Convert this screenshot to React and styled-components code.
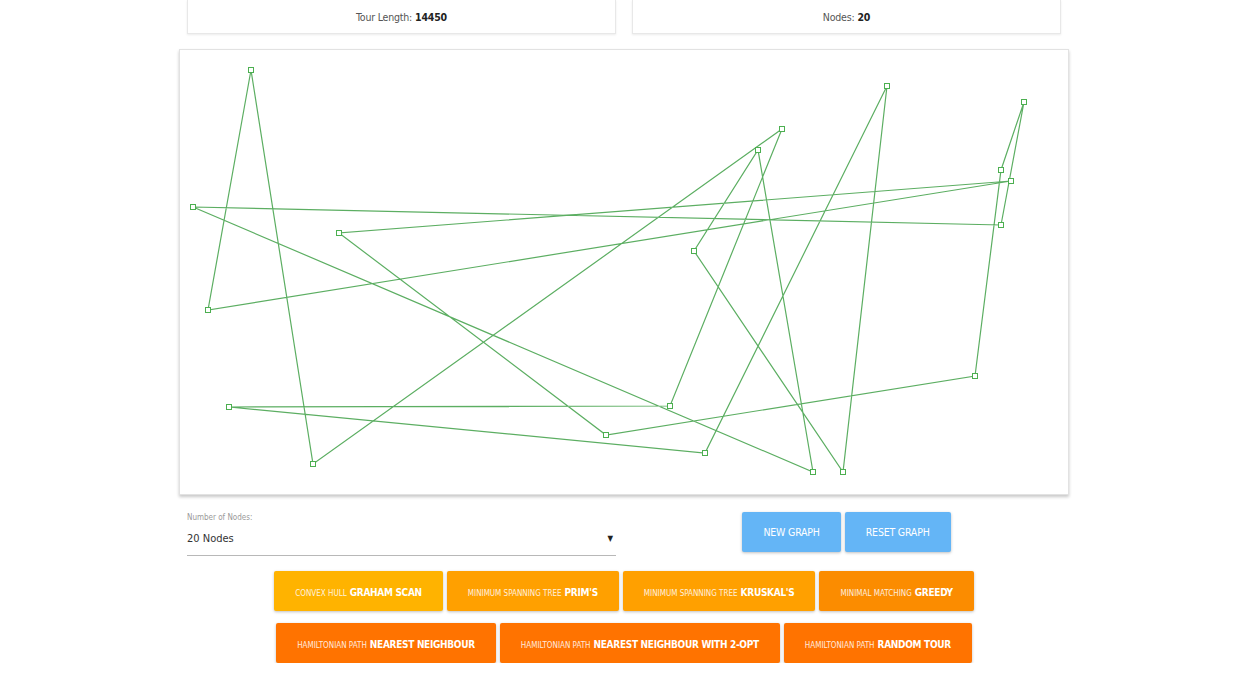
import React from "react";
import styled, { createGlobalStyle } from "styled-components";

const GlobalStyle = createGlobalStyle`
  html, body {
    margin: 0;
    padding: 0;
    background: #ffffff;
    font-family: "Liberation Sans Narrow", "DejaVu Sans Condensed", "Liberation Sans", sans-serif;
    color: #444;
  }
`;

const Page = styled.div`
  width: 890px;
  margin: 0 auto;
  display: flex;
  flex-direction: column;
`;

const TwoCols = styled.div`
  display: grid;
  grid-template-columns: 1fr 1fr;
  align-items: ${(props) => props.align || "stretch"};
`;

const StatCard = styled.div`
  margin: 0 8px 0 8px;
  height: 33px;
  display: flex;
  align-items: center;
  justify-content: center;
  background: #fff;
  border: 1px solid #e8e8e8;
  border-top: none;
  box-shadow: 0 1px 2px rgba(0, 0, 0, 0.08);
  font-size: 10.5px;
  letter-spacing: -0.2px;
  color: #555;

  b {
    color: #222;
    margin-left: 3px;
  }
`;

const Canvas = styled.div`
  margin-top: 15px;
  height: 444px;
  background: #fff;
  border: 1px solid #e2e2e2;
  box-shadow: 0 2px 3px rgba(0, 0, 0, 0.22);

  svg {
    display: block;
  }
`;

const Controls = styled(TwoCols)`
  margin-top: 16px;
`;

const SelectField = styled.div`
  margin: 2px 8px 0 8px;
  display: flex;
  flex-direction: column;
  align-items: stretch;
  text-align: left;
`;

const FieldLabel = styled.span`
  align-self: flex-start;
  font-size: 8px;
  color: #9a9a9a;
`;

const SelectBox = styled.div`
  display: flex;
  justify-content: space-between;
  align-items: center;
  height: 33px;
  border-bottom: 1px solid #b8b8b8;
  font-size: 11px;
  color: #333;

  span:last-child {
    font-size: 8px;
    margin-right: 3px;
    color: #222;
  }
`;

const ButtonGroup = styled.div`
  margin-top: 1px;
  display: flex;
  justify-content: center;
  gap: 4px;
`;

const BlueButton = styled.button`
  height: 40px;
  padding: 0 21px;
  border: none;
  border-radius: 2px;
  background: #64b5f6;
  color: #fff;
  font-family: inherit;
  font-size: 10.5px;
  letter-spacing: -0.2px;
  text-transform: uppercase;
  box-shadow: 0 1px 3px rgba(0, 0, 0, 0.25);
`;

const AlgoRows = styled.div`
  margin-top: 15px;
  display: flex;
  flex-direction: column;
  gap: 12px;
`;

const AlgoRow = styled.div`
  display: flex;
  justify-content: center;
  gap: 4px;
`;

const AlgoButton = styled.button`
  height: 40px;
  padding: 0 21px;
  border: none;
  border-radius: 2px;
  background: ${(props) => props.color};
  color: #fff;
  font-family: inherit;
  text-transform: uppercase;
  white-space: nowrap;
  box-shadow: 0 1px 3px rgba(0, 0, 0, 0.25);

  small {
    font-size: 8px;
    opacity: 0.85;
    margin-right: 3px;
  }

  strong {
    font-size: 10px;
    letter-spacing: -0.3px;
    font-weight: 700;
  }
`;

const nodes = [
  [71, 20], [707, 36], [844, 52], [602, 79], [578, 100],
  [821, 120], [831, 131], [13, 157], [821, 175], [159, 183],
  [514, 201], [28, 260], [795, 326], [49, 357], [490, 356],
  [426, 385], [525, 403], [133, 414], [633, 422], [663, 422],
];

// closed tour through every node, by index
const tour = [0, 11, 6, 9, 15, 12, 5, 2, 8, 7, 18, 4, 10, 19, 1, 16, 13, 14, 3, 17];

const TourGraph = () => {
  const points = tour.map((i) => nodes[i].join(",")).join(" ");
  return (
    <svg width="888" height="444">
      <polygon points={points} fill="none" stroke="#5cae62" strokeWidth="1.2" />
      {nodes.map(([x, y], i) => (
        <rect
          key={i}
          x={x - 2.5}
          y={y - 2.5}
          width="5"
          height="5"
          fill="#fff"
          stroke="#4caf50"
          strokeWidth="1"
        />
      ))}
    </svg>
  );
};

const rowOne = [
  ["Convex hull", "Graham scan", "#ffb300"],
  ["Minimum spanning tree", "Prim's", "#ffa000"],
  ["Minimum spanning tree", "Kruskal's", "#ffa000"],
  ["Minimal matching", "Greedy", "#fb8c00"],
];

const rowTwo = [
  ["Hamiltonian path", "Nearest neighbour", "#ff7300"],
  ["Hamiltonian path", "Nearest neighbour with 2-opt", "#ff7300"],
  ["Hamiltonian path", "Random tour", "#ff7300"],
];

const App = () => {
  return (
    <>
      <GlobalStyle />
      <Page>
        <TwoCols>
          <StatCard>
            Tour Length: <b>14450</b>
          </StatCard>
          <StatCard>
            Nodes: <b>20</b>
          </StatCard>
        </TwoCols>

        <Canvas>
          <TourGraph />
        </Canvas>

        <Controls align="start">
          <SelectField>
            <FieldLabel>Number of Nodes:</FieldLabel>
            <SelectBox>
              <span>20 Nodes</span>
              <span>▼</span>
            </SelectBox>
          </SelectField>
          <ButtonGroup>
            <BlueButton>New Graph</BlueButton>
            <BlueButton>Reset Graph</BlueButton>
          </ButtonGroup>
        </Controls>

        <AlgoRows>
          <AlgoRow>
            {rowOne.map(([kind, name, color]) => (
              <AlgoButton key={kind + name} color={color}>
                <small>{kind}</small>
                <strong>{name}</strong>
              </AlgoButton>
            ))}
          </AlgoRow>
          <AlgoRow>
            {rowTwo.map(([kind, name, color]) => (
              <AlgoButton key={kind + name} color={color}>
                <small>{kind}</small>
                <strong>{name}</strong>
              </AlgoButton>
            ))}
          </AlgoRow>
        </AlgoRows>
      </Page>
    </>
  );
};

export default App;
